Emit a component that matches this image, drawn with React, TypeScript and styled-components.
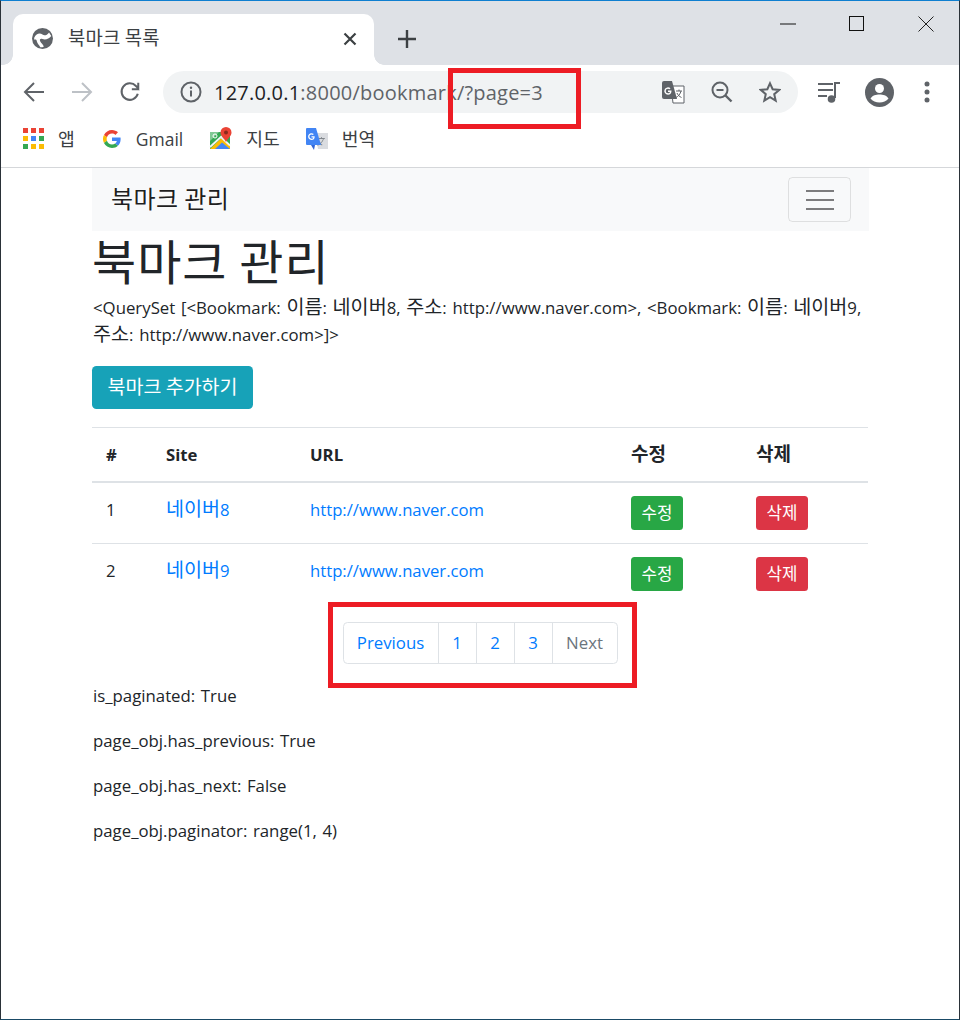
import React from "react";
import styled, { createGlobalStyle } from "styled-components";

const Global = createGlobalStyle`
  html, body { margin: 0; padding: 0; background: #fff; }
  * { box-sizing: border-box; }
  body { font-family: "Open Sans", "Noto Sans CJK KR", sans-serif; }
`;
const KR = `"Open Sans", "Noto Sans CJK KR", sans-serif`;

const Win = styled.div`
  position: relative; width: 960px; height: 1020px; background: #fff;
  border: 1px solid #2a3138; border-top: 1px solid #0f7fd0; border-bottom: 1px solid #1a4a66; overflow: hidden;
  display: flex; flex-direction: column; font-family: ${KR};
`;
const Ko = styled.span<{ $s?: number }>`
  font-size: ${p => p.$s ?? 19.6}px; line-height: 1; font-family: "Noto Sans CJK KR", sans-serif;
`;
const TabStrip = styled.div`
  height: 64px; flex: none; background: #dee1e6; display: flex; align-items: flex-end; padding-left: 12px; position: relative;
`;
const Tab = styled.div`
  width: 361px; height: 51px; background: #fff; border-radius: 10px 10px 0 0; display: flex; align-items: center;
  padding: 0 17px 2px 19px; position: relative;
  &::before, &::after { content: ""; position: absolute; bottom: 0; width: 10px; height: 10px; }
  &::before { left: -10px; background: radial-gradient(circle at 0 0, #dee1e6 9.5px, #fff 10px); }
  &::after { right: -10px; background: radial-gradient(circle at 100% 0, #dee1e6 9.5px, #fff 10px); }
`;
const TabTitle = styled.span`
  margin-left: 15px; font-size: 18.8px; color: #3c4043; flex: 1; letter-spacing: 0.2px; font-family: "Noto Sans CJK KR", sans-serif; margin-top: -4px;
`;
const NewTab = styled.div`margin: 0 0 9px 24px; width: 18px; height: 18px; display: flex; align-self: flex-end; margin-bottom: 17px;`;
const WinControls = styled.div`
  position: absolute; top: 0; right: -1px; display: flex; align-items: flex-start;
`;
const WinBtn = styled.div`width: 69px; height: 45px; display: flex; align-items: center; justify-content: center;`;

const Toolbar = styled.div`
  height: 53px; flex: none; display: flex; align-items: flex-start; padding: 6px 0 0 21px; background: #fff;
`;
const NavIcon = styled.div`width: 24px; height: 42px; display: flex; align-items: center; justify-content: center; margin-right: 24px;`;
const Omnibox = styled.div`
  width: 635px; height: 42px; border-radius: 21px; background: #f1f3f4; display: flex; align-items: center; padding: 0 17px 0 17px; margin-left: -3px;
`;
const Url = styled.div`
  margin-left: 12px; flex: 1; font-size: 20px; color: #5f6368; font-family: "Open Sans", sans-serif; white-space: nowrap; letter-spacing: 0.22px;
  b { font-weight: 400; color: #202124; }
`;
const OmniIcons = styled.div`display: flex; align-items: center; gap: 26px;`;
const ToolRight = styled.div`display: flex; align-items: center; height: 42px; margin-left: 19px; gap: 24px;`;
const DotsIcon = styled.svg`margin-left: 6px;`;

const Bookmarks = styled.div`
  height: 50px; flex: none; display: flex; align-items: center; padding: 0 0 8px 22px; border-bottom: 1px solid #d5d7da; background: #fff;
`;
const Bm = styled.div<{ $gap: number; $w: number }>`
  display: flex; align-items: center; gap: ${p => p.$gap}px; margin-right: ${p => p.$w}px; font-size: 17.5px; color: #3c4043;
`;

const Page = styled.div`
  width: 777px; margin-left: 91px; color: #212529; font-size: 16.8px; line-height: 27px;
`;
const Navbar = styled.div`
  height: 63px; background: #f8f9fa; display: flex; align-items: center; justify-content: space-between; padding: 0 18px 0 19px;
`;
const Brand = styled.div`font-size: 24px; letter-spacing: 0.4px; color: rgba(0,0,0,.9); font-family: "Noto Sans CJK KR", sans-serif; line-height: 30px; margin-top: -3px;`;
const Toggler = styled.div`
  width: 63px; height: 45px; border: 1px solid rgba(0,0,0,.1); border-radius: 4.5px; display: flex; flex-direction: column; justify-content: center; align-items: center; gap: 7px;
  span { display: block; width: 28px; height: 2px; background: rgba(0,0,0,.5); }
`;
const H1 = styled.h1`
  margin: 0 0 7px 0; font-size: 48px; font-weight: 400; line-height: 56px; height: 56px; letter-spacing: 1px; font-family: "Noto Sans CJK KR", sans-serif;
`;
const Para = styled.p`margin: 0 0 18px 1px; word-spacing: 1.3px;`;
const Add = styled.div`
  display: inline-block; height: 43px; width: 161px; background: #17a2b8; color: #fff; border-radius: 4.5px; font-size: 19.5px; line-height: 40px; text-align: center; font-family: "Noto Sans CJK KR", sans-serif;
`;
const Table = styled.table`
  width: 776px; margin-top: 18px; border-collapse: collapse; table-layout: fixed; font-size: 16.7px;
  th { text-align: left; padding: 0 14px; height: 54px; border-top: 1px solid #dee2e6; border-bottom: 2px solid #dee2e6; font-weight: 700; }
  td { padding: 13px 14px 0; height: 62px; border-bottom: 1px solid #dee2e6; vertical-align: top; }
  tr:last-child td { border-bottom: none; height: 60px; }
  a { color: #007bff; text-decoration: none; }
`;
const SmallBtn = styled.div<{ $bg: string }>`
  width: 52px; height: 34px; border-radius: 3.5px; background: ${p => p.$bg}; color: #fff; font-size: 16.8px; line-height: 33px; text-align: center; font-family: "Noto Sans CJK KR", sans-serif;
`;
const PagerWrap = styled.div`display: flex; justify-content: center; margin: 18px 1px 18px 0;`;
const Pager = styled.div`display: flex; height: 42px; border: 1px solid #dee2e6; border-radius: 4.5px; padding-left: 0;`;
const PageItem = styled.div<{ $w: number; $muted?: boolean }>`
  width: ${p => p.$w}px; display: flex; align-items: center; justify-content: center; color: ${p => (p.$muted ? "#6c757d" : "#007bff")};
  & + & { border-left: 1px solid #dee2e6; }
`;
const Info = styled.p`margin: 0 0 18px 1px; font-size: 16.8px; word-spacing: 1.2px;`;

const RedBox = styled.div<{ $x: number; $y: number; $w: number; $h: number }>`
  position: absolute; left: ${p => p.$x}px; top: ${p => p.$y}px; width: ${p => p.$w}px; height: ${p => p.$h}px; border: 5px solid #ed1c24;
`;

const GIcon = ({ s = 18 }: { s?: number }) => (
  <svg width={s} height={s} viewBox="0 0 48 48">
    <path fill="#EA4335" d="M24 9.5c3.5 0 6.700 1.300 9.100 3.500l6.800-6.800C35.800 2.400 30.300 0 24 0 14.600 0 6.500 5.400 2.600 13.200l7.900 6.200C12.400 13.700 17.700 9.500 24 9.500z" />
    <path fill="#4285F4" d="M47 24.500c0-1.600-.1-3.100-.4-4.500H24v9h12.900c-.6 3-2.200 5.500-4.700 7.200l7.600 5.900C44.200 38 47 31.900 47 24.500z" />
    <path fill="#FBBC05" d="M10.500 28.600A14.500 14.500 0 0 1 10.500 19.400l-7.900-6.200a24 24 0 0 0 0 21.600z" />
    <path fill="#34A853" d="M24 48c6.500 0 11.900-2.100 15.800-5.900l-7.600-5.900c-2.100 1.400-4.900 2.300-8.200 2.300-6.300 0-11.600-4.200-13.500-9.900l-7.900 6.200C6.500 42.600 14.600 48 24 48z" />
  </svg>
);

const Dots = () => {
  const cols = ["#ea4335", "#ea4335", "#ea4335", "#fbbc05", "#4285f4", "#34a853", "#34a853", "#fbbc05", "#fbbc05"];
  return (
    <svg width="21" height="21" viewBox="0 0 21 21">
      {cols.map((c, i) => (
        <rect key={i} x={(i % 3) * 8} y={Math.floor(i / 3) * 8} width="5" height="5" fill={c} />
      ))}
    </svg>
  );
};

const Maps = () => (
  <svg width="24" height="24" viewBox="0 0 24 24">
    <path d="M1 5h20v17H1z" fill="#34a853" />
    <path d="M1 22 12.500 11l8.500 8v3z" fill="#fbbc05" />
    <path d="M6 22l7-6.500L21 22z" fill="#4285f4" />
    <path d="M1 20 13 9M12 10l9 8.500" stroke="#f1f3f4" strokeWidth="1.800" fill="none" />
    <path d="M1 5h9L1 14z" fill="#81c995" />
    <circle cx="6" cy="9" r="2" fill="none" stroke="#fff" strokeWidth="1" />
    <path d="M17 0a5.500 5.500 0 0 0-5.500 5.500C11.500 9 15 11 17 15c2-4 5.500-6 5.500-9.500A5.500 5.500 0 0 0 17 0z" fill="#ea4335" />
    <circle cx="17" cy="5.500" r="2" fill="#8a2a1c" />
  </svg>
);

const Translate = () => (
  <svg width="24" height="24" viewBox="0 0 24 24">
    <path d="M10 6h13v16H13z" fill="#dadce0" />
    <path d="M16 10v1h-3v1h5c-.4 1.400-1.500 3-3 4-.7-.6-1.300-1.300-1.600-2h-1c.4 1 1 1.900 1.800 2.700l-2 1.300.6.800 2.200-1.500 2 1.300.5-.8-1.700-1.200c1.400-1.200 2.500-3 3-4.600h1v-1h-3v-1z" fill="#80868b" />
    <path d="M1 2a1 1 0 0 1 1-1h9l5 17H2a1 1 0 0 1-1-1z" fill="#4285f4" />
    <path d="M10 18l-1 5-3-5z" fill="#3367d6" />
    <path d="M8.500 8.200h-3v1.200H7.400c-.2.800-.9 1.300-1.900 1.300a2.100 2.100 0 0 1 0-4.200c.5 0 1 .2 1.400.5l.9-.9a3.400 3.400 0 1 0-2.300 5.900c2 0 3.200-1.300 3.200-3.300z" fill="#fff" transform="translate(1 1)" />
  </svg>
);

const I = "#5f6368";

export default function App() {
  return (
    <>
      <Global />
      <Win>
        <TabStrip>
          <Tab>
            <svg width="21" height="21" viewBox="0 0 24 24">
              <circle cx="12" cy="12" r="12" fill={I} />
              <path d="M2.500 11C5 6 9 5 12 7.500c2 1.700 5 1 7.500-2.500l2.500 4c-2.500 3-6.500 5-10 3.500-2-.8-4 .2-2.500 3 1 2 3 3 4 5.500-1 .8-2.500 1-4 1-1.500-3-3.500-4.500-4-7-.4-2-2-2-3-1.500z" fill="#fff" />
            </svg>
            <TabTitle>북마크 목록</TabTitle>
            <svg width="14" height="14" viewBox="0 0 14 14">
              <path d="M1.500 1.500l11 11M12.500 1.500l-11 11" stroke="#3c4043" strokeWidth="2.200" />
            </svg>
          </Tab>
          <NewTab>
            <svg width="18" height="18" viewBox="0 0 18 18">
              <path d="M9 0v18M0 9h18" stroke="#3c4043" strokeWidth="2.400" />
            </svg>
          </NewTab>
          <WinControls>
            <WinBtn>
              <svg width="16" height="2" viewBox="0 0 16 2"><path d="M0 1h16" stroke="#111" strokeWidth="1" /></svg>
            </WinBtn>
            <WinBtn>
              <svg width="15" height="15" viewBox="0 0 15 15"><rect x=".5" y=".5" width="14" height="14" fill="none" stroke="#111" /></svg>
            </WinBtn>
            <WinBtn>
              <svg width="16" height="16" viewBox="0 0 16 16"><path d="M.5.5l15 15M15.500.5l-15 15" stroke="#222" /></svg>
            </WinBtn>
          </WinControls>
        </TabStrip>
        <Toolbar>
          <NavIcon>
            <svg width="22" height="22" viewBox="0 0 22 22"><path d="M21 11H3M11 2l-9 9 9 9" fill="none" stroke={I} strokeWidth="2" /></svg>
          </NavIcon>
          <NavIcon>
            <svg width="22" height="22" viewBox="0 0 22 22"><path d="M1 11h18M11 2l9 9-9 9" fill="none" stroke="#bdc1c6" strokeWidth="2" /></svg>
          </NavIcon>
          <NavIcon>
            <svg width="22" height="22" viewBox="0 0 24 24"><path d="M20.500 14a9 9 0 1 1-2-8.500L21 8V2v7h-7" fill="none" stroke={I} strokeWidth="2.200" /></svg>
          </NavIcon>
          <Omnibox>
            <svg width="22" height="22" viewBox="0 0 22 22">
              <circle cx="11" cy="11" r="9.500" fill="none" stroke={I} strokeWidth="2" />
              <path d="M11 9.500v6" stroke={I} strokeWidth="2" />
              <circle cx="11" cy="6.800" r="1.200" fill={I} />
            </svg>
            <Url><b>127.0.0.1</b>:8000/bookmark/?page=3</Url>
            <OmniIcons>
              <svg width="23" height="23" viewBox="0 0 23 23">
                <path d="M9 5h13v17H11z" fill="#fff" stroke={I} strokeWidth="1" />
                <path d="M0 2a2 2 0 0 1 2-2h8l5 18H2a2 2 0 0 1-2-2z" fill={I} />
                <path d="M14 10h6M17 8.500v1.500M19 10c-.5 3-3 5.500-5 6.500M15 12c.7 2 2.500 3.500 4.500 4.500" stroke={I} strokeWidth="1" fill="none" />
                <path d="M10.500 8.500h-3.500v1.400h2c-.2.900-1 1.400-2 1.400a2.300 2.300 0 0 1 0-4.600c.6 0 1.100.2 1.500.6l1-1a3.700 3.700 0 1 0-2.500 6.400c2.200 0 3.500-1.500 3.500-3.800z" fill="#fff" transform="translate(-1 1)" />
              </svg>
              <svg width="22" height="22" viewBox="0 0 22 22">
                <circle cx="9" cy="9" r="7.500" fill="none" stroke={I} strokeWidth="2" />
                <path d="M14.500 14.500l6 6" stroke={I} strokeWidth="2.400" />
                <path d="M5.500 9h7" stroke={I} strokeWidth="2" />
              </svg>
              <svg width="22" height="22" viewBox="0 0 24 24">
                <path d="M12 2.500l2.900 6.500 7.100.7-5.400 4.700 1.600 7-6.200-3.700-6.200 3.700 1.600-7L2 9.700 9.100 9z" fill="none" stroke={I} strokeWidth="2.200" />
              </svg>
            </OmniIcons>
          </Omnibox>
          <ToolRight>
            <svg width="24" height="24" viewBox="0 0 24 24">
              <path d="M1 4h15M1 10h15M1 16h9" stroke={I} strokeWidth="2.200" />
              <path d="M18 18V3h5" fill="none" stroke={I} strokeWidth="2" />
              <circle cx="14.500" cy="19" r="3.800" fill={I} />
            </svg>
            <svg width="29" height="29" viewBox="0 0 29 29">
              <circle cx="14.500" cy="14.500" r="14.500" fill={I} />
              <circle cx="14.500" cy="10.500" r="4.500" fill="#fff" />
              <path d="M5.500 20.500c2-3.200 5.500-4 9-4s7 .8 9 4c-2 2.500-5.500 4-9 4s-7-1.500-9-4z" fill="#fff" />
            </svg>
            <DotsIcon width="6" height="22" viewBox="0 0 6 22">
              <circle cx="3" cy="3" r="2.500" fill={I} />
              <circle cx="3" cy="11" r="2.500" fill={I} />
              <circle cx="3" cy="19" r="2.500" fill={I} />
            </DotsIcon>
          </ToolRight>
        </Toolbar>
        <Bookmarks>
          <Bm $gap={14} $w={28}><Dots /><Ko $s={18.2}>앱</Ko></Bm>
          <Bm $gap={15} $w={26}><GIcon />Gmail</Bm>
          <Bm $gap={13} $w={25}><Maps /><Ko $s={18.2}>지도</Ko></Bm>
          <Bm $gap={13} $w={0}><Translate /><Ko $s={18.2}>번역</Ko></Bm>
        </Bookmarks>
        <Page>
          <Navbar>
            <Brand>북마크 관리</Brand>
            <Toggler><span /><span /><span /></Toggler>
          </Navbar>
          <H1>북마크 관리</H1>
          <Para>&lt;QuerySet [&lt;Bookmark: <Ko>이름</Ko>: <Ko>네이버</Ko>8, <Ko>주소</Ko>: http://www.naver.com&gt;, &lt;Bookmark: <Ko>이름</Ko>: <Ko>네이버</Ko>9, <Ko>주소</Ko>: http://www.naver.com&gt;]&gt;</Para>
          <Add>북마크 추가하기</Add>
          <Table>
            <colgroup>
              <col style={{ width: 60 }} /><col style={{ width: 144 }} /><col style={{ width: 321 }} /><col style={{ width: 125 }} /><col />
            </colgroup>
            <thead>
              <tr><th>#</th><th>Site</th><th>URL</th><th><Ko $s={19}>수정</Ko></th><th><Ko $s={19}>삭제</Ko></th></tr>
            </thead>
            <tbody>
              {[8, 9].map((n, i) => (
                <tr key={n}>
                  <td>{i + 1}</td>
                  <td><a><Ko>네이버</Ko>{n}</a></td>
                  <td><a>http://www.naver.com</a></td>
                  <td><SmallBtn $bg="#28a745">수정</SmallBtn></td>
                  <td><SmallBtn $bg="#dc3545">삭제</SmallBtn></td>
                </tr>
              ))}
            </tbody>
          </Table>
          <PagerWrap>
            <Pager>
              <PageItem $w={94}>Previous</PageItem>
              <PageItem $w={38}>1</PageItem>
              <PageItem $w={38}>2</PageItem>
              <PageItem $w={38}>3</PageItem>
              <PageItem $w={65} $muted>Next</PageItem>
            </Pager>
          </PagerWrap>
          <Info>is_paginated: True</Info>
          <Info>page_obj.has_previous: True</Info>
          <Info>page_obj.has_next: False</Info>
          <Info>page_obj.paginator: range(1, 4)</Info>
        </Page>
        <RedBox $x={447} $y={67} $w={133} $h={61} />
        <RedBox $x={327} $y={601} $w={309} $h={86} />
      </Win>
    </>
  );
}
